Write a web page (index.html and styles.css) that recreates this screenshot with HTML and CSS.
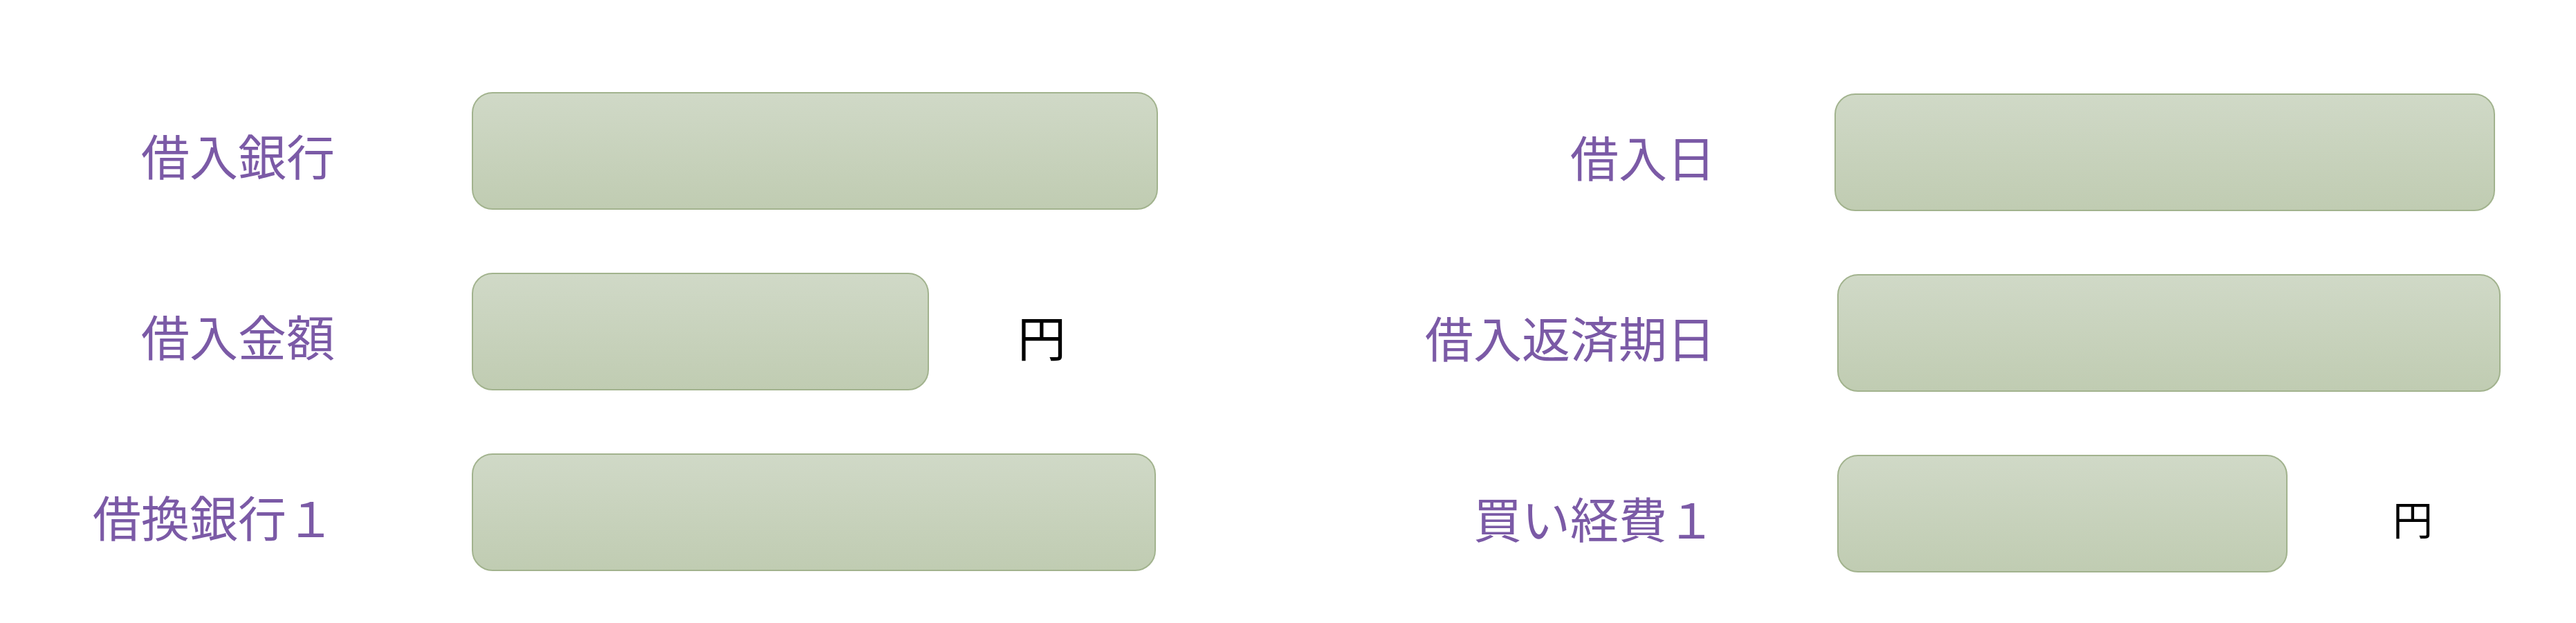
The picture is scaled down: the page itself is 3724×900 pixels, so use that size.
FILE: index.html
```html
<!DOCTYPE html>
<html lang="ja">
<head>
<meta charset="utf-8">
<title>借入情報</title>
<link rel="stylesheet" href="styles.css">
</head>
<body>
<form class="form">
  <div class="row">
    <div class="field field-left">
      <label class="label">借入銀行</label>
      <input class="box box-l1" type="text">
    </div>
    <div class="field field-right">
      <label class="label">借入日</label>
      <input class="box box-r1" type="text">
    </div>
  </div>
  <div class="row">
    <div class="field field-left">
      <label class="label">借入金額</label>
      <input class="box box-l2" type="text">
      <span class="unit unit-l">円</span>
    </div>
    <div class="field field-right">
      <label class="label">借入返済期日</label>
      <input class="box box-r2" type="text">
    </div>
  </div>
  <div class="row">
    <div class="field field-left">
      <label class="label">借換銀行１</label>
      <input class="box box-l3" type="text">
    </div>
    <div class="field field-right">
      <label class="label">買い経費１</label>
      <input class="box box-r3" type="text">
      <span class="unit unit-r">円</span>
    </div>
  </div>
</form>
</body>
</html>
```

FILE: styles.css
```css
html, body {
  margin: 0;
  padding: 0;
  background: #ffffff;
}

body {
  width: 3724px;
  height: 900px;
  overflow: hidden;
  font-family: "Noto Sans CJK JP", "Noto Sans", sans-serif;
}

.form {
  display: flex;
  flex-direction: column;
  gap: 91px;
  padding-top: 133px;
  margin: 0;
}

.row {
  display: flex;
  height: 170px;
}

.field {
  display: flex;
  align-items: center;
}

.field-left {
  width: 1900px;
}

.field-right {
  padding-top: 4px;
}

.label {
  font-size: 70px;
  line-height: 1;
  color: #7b5aa6;
  text-align: right;
  white-space: nowrap;
  padding-top: 12px;
}

.field-left .label {
  width: 484px;
  margin-right: 198px;
}

.field-right .label {
  width: 580px;
  margin-right: 176px;
}

.box {
  -webkit-appearance: none;
  appearance: none;
  box-sizing: border-box;
  height: 170px;
  margin: 0;
  padding: 0 20px;
  border: 2px solid #a2b38e;
  border-radius: 30px;
  background: linear-gradient(to bottom, #d0d9c7 0%, #c0ccb2 100%);
  font-family: inherit;
  font-size: 60px;
  outline: none;
}

.box-l1 { width: 992px; }
.box-l2 { width: 661px; }
.box-l3 { width: 989px; }
.box-r1 { width: 955px; margin-left: -4px; }
.box-r2 { width: 959px; }
.box-r3 { width: 651px; }

.unit {
  color: #000000;
  line-height: 1;
  white-space: nowrap;
}

.unit-l {
  font-size: 70px;
  margin-left: 128px;
  padding-top: 14px;
}

.unit-r {
  font-size: 58px;
  margin-left: 152px;
  padding-top: 12px;
}
```
